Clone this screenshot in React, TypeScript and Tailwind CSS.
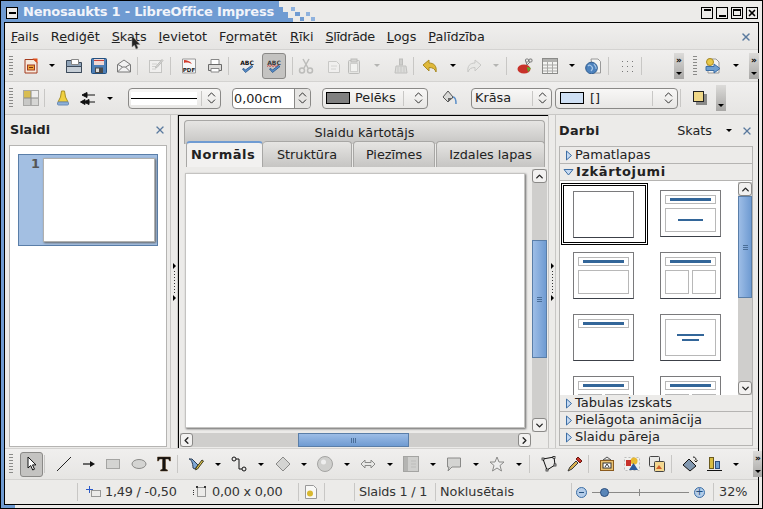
import React from 'react';
import { X, ChevronUp, ChevronDown, ChevronLeft, ChevronRight } from 'lucide-react';

type IconProps = { className?: string };

const Svg: React.FC<IconProps & { children: React.ReactNode }> = ({ className = '', children }) => (
  <svg viewBox="0 0 16 16" className={`w-4 h-4 shrink-0 ${className}`} fill="none">{children}</svg>
);

// toolbar icons, drawn by hand to follow the old Galaxy icon set
const NewDoc = ({ className }: IconProps) => <Svg className={className}><path d="M2 1.500h9l3 3v10.500H2z" fill="#f6e9dc" stroke="#a33a1e" /><path d="M9.500 0.500l5 0 0 5z" fill="#e0501c" /><rect x="4.500" y="7" width="7" height="5" fill="#eda53a" stroke="#a33a1e" /><path d="M6 9.500h4" stroke="#7a2a10" /></Svg>;
const Open = ({ className }: IconProps) => <Svg className={className}><path d="M0.500 2.500h6l1 2h8v10h-15z" fill="#8fa3b8" stroke="#3c4a5a" /><path d="M5.500 1.500h7v5h-7z" fill="#fff" stroke="#888" /><path d="M0.500 8.500h15v6h-15z" fill="#c6ced6" stroke="#3c4a5a" /></Svg>;
const Save = ({ className }: IconProps) => <Svg className={className}><rect x="0.500" y="0.500" width="15" height="15" rx="1" fill="#4d7fb8" stroke="#23507f" /><rect x="3" y="1" width="10" height="6" fill="#f0d8d4" /><path d="M3 2.500h10" stroke="#c8413a" /><rect x="4" y="9.500" width="8" height="5.500" fill="#4a4a4a" /><rect x="5" y="10.500" width="3" height="3.500" fill="#ddd" /></Svg>;
const Mail = ({ className }: IconProps) => <Svg className={className}><path d="M1.500 6.500L8 2l6.500 4.500V14h-13z" fill="#f2f2f2" stroke="#777" /><path d="M1.500 14L6.500 9h3l5 5M2 6.500l4.500 2.500M14 6.500L9.500 9" stroke="#777" /></Svg>;
const Edit = ({ className }: IconProps) => <Svg className={className}><rect x="1.500" y="2.500" width="12" height="12" fill="#f0efee" stroke="#c4c4c2" /><path d="M4 6h5M4 8.500h4M4 11h4" stroke="#d0d0ce" /><path d="M14 1.500l1 1-6 7-1.500.5.500-1.500z" fill="#d8d8d6" stroke="#bdbdbb" /></Svg>;
const Pdf = ({ className }: IconProps) => <Svg className={className}><path d="M1.500 1h13v14h-13z" fill="#f8f8f8" stroke="#999" /><path d="M3 2c3 0 6 1 8 4-2-1-5-2-8-1z" fill="#d23a2a" /><text x="8" y="13.500" textAnchor="middle" fontSize="5.500" fontWeight="700" fill="#222" fontFamily="DejaVu Sans">PDF</text></Svg>;
const Printer = ({ className }: IconProps) => <Svg className={className}><path d="M4 1.500h8v5H4z" fill="#fff" stroke="#888" /><path d="M1.500 6.500h13v6h-13z" fill="#dedddb" stroke="#6a6a6a" /><path d="M4 10.500h8v3.500H4z" fill="#fff" stroke="#888" /></Svg>;
const Spell = ({ className, wave }: IconProps & { wave?: boolean }) => <Svg className={className}><text x="8" y="6.500" textAnchor="middle" fontSize="6" fontWeight="700" fill={wave ? '#3a3a3a' : '#111'} fontFamily="DejaVu Sans">ABC</text>{wave && <path d="M1 8.500l1.500-1 1.500 1 1.500-1 1.500 1 1.500-1 1.500 1 1.500-1 1.500 1" stroke="#d0302a" strokeWidth="0.800" />}<path d="M3.500 11l3 3.500L14 8.500l-1.500-1-6 4.500-1.500-1.500z" fill="#5a8ec8" stroke="#26568c" strokeWidth="0.800" /></Svg>;
const Cut = ({ className }: IconProps) => <Svg className={className}><path d="M5 1l5 9M11 1L6 10" stroke="#bcbcba" strokeWidth="1.500" /><circle cx="4" cy="12.500" r="2.500" stroke="#bcbcba" strokeWidth="1.500" /><circle cx="12" cy="12.500" r="2.500" stroke="#bcbcba" strokeWidth="1.500" /></Svg>;
const Copy = ({ className }: IconProps) => <Svg className={className}><path d="M2.500 3.500h8l3 3v8h-11z" fill="#f0efee" stroke="#c8c8c6" /><path d="M5 8h6M5 11h5" stroke="#d4d4d2" /></Svg>;
const Paste = ({ className }: IconProps) => <Svg className={className}><rect x="2.500" y="2.500" width="11" height="13" rx="1" fill="#e4e4e2" stroke="#bcbcba" /><rect x="5" y="1" width="6" height="3" fill="#d4d4d2" stroke="#bcbcba" /><rect x="4.500" y="5.500" width="7" height="8" fill="#f2f2f0" stroke="#cfcfcd" /></Svg>;
const Brush = ({ className }: IconProps) => <Svg className={className}><rect x="6.500" y="1" width="3" height="6" fill="#cfcfcd" stroke="#bdbdbb" /><path d="M3 8h10l1 7H2z" fill="#dcdcda" stroke="#c0c0be" /><path d="M5 8.500v6M8 8.500v6M11 8.500v6" stroke="#c8c8c6" /></Svg>;
const Undo = ({ className }: IconProps) => <Svg className={className}><path d="M1 7l6-5v3c5 0 8 3 7 9-1-3-3-4.500-7-4.500V13z" fill="#e0b93a" stroke="#a98a22" /></Svg>;
const Redo = ({ className }: IconProps) => <Svg className={className}><path d="M15 7L9 2v3C4 5 1 8 2 14c1-3 3-4.500 7-4.500V13z" fill="#e8e8e6" stroke="#c8c8c6" /></Svg>;
const Navigator = ({ className }: IconProps) => <Svg className={className}><ellipse cx="7" cy="11" rx="6.500" ry="4.500" fill="#c8322a" /><path d="M10 9l4 1-3 4z" fill="#5ab02a" /><rect x="8.500" y="1" width="3" height="3" rx="1" stroke="#777" /><rect x="12" y="1" width="3" height="3" rx="1" stroke="#777" /><path d="M9 4l1 3 3-3" stroke="#777" /></Svg>;
const Table = ({ className }: IconProps) => <Svg className={className}><rect x="0.500" y="0.500" width="15" height="15" fill="#f4f4f2" stroke="#8a8a88" /><rect x="1" y="1" width="14" height="3" fill="#b0b0ae" /><path d="M1 7h14M1 10h14M1 13h14M5.500 4v11M10.500 4v11" stroke="#a8a8a6" /></Svg>;
const Globe = ({ className }: IconProps) => <Svg className={className}><path d="M6 1h7l2.500 2.500V15H8z" fill="#f4f4f2" stroke="#999" /><circle cx="6.500" cy="10" r="5.800" fill="#4d82bd" stroke="#2c5a8e" /><path d="M3 8c2-2 3 0 4 1s0 3-1 4M9 6c1 2 3 3 2 5" stroke="#a8c8e8" strokeWidth="1.200" /></Svg>;
const Dots = ({ className }: IconProps) => <Svg className={className}>{[3, 8, 13].map(x => [3, 8, 13].map(y => <rect key={`${x}-${y}`} x={x} y={y} width="1" height="1" fill="#777" />))}</Svg>;
const SlideNew = ({ className }: IconProps) => <Svg className={className}><path d="M3 1h8l3 3v11H3z" fill="#f4f4f2" stroke="#999" /><circle cx="5" cy="4" r="3.500" fill="#e8c94a" stroke="#a98a22" /><path d="M1 8.500h8V6l6 4.500-6 4.500v-2.500H1z" fill="#6f9fd0" stroke="#3c6ea5" /></Svg>;
const AreaStyle = ({ className }: IconProps) => <Svg className={className}><rect x="0.500" y="0.500" width="15" height="15" fill="#eee" stroke="#a8a8a6" /><rect x="1" y="1" width="7" height="7" fill="#d8bd52" /><rect x="8" y="8" width="7" height="7" fill="#d6d6d4" /><rect x="1" y="8" width="7" height="7" fill="#c8c8c6" /><path d="M8 1v14M1 8h14" stroke="#8a8a88" /></Svg>;
const Bell = ({ className }: IconProps) => <Svg className={className}><path d="M6.500 1h3l1 6 2.500 5H3l2.500-5z" fill="#f0d040" stroke="#a99022" /><rect x="2.500" y="12" width="11" height="3" rx="1" fill="#8eb0d8" stroke="#6a8cb8" /></Svg>;
const Arrows = ({ className }: IconProps) => <Svg className={className}><path d="M15 5H4M7 2.500L2 5l5 2.500z" stroke="#111" fill="#111" /><path d="M15 12H6M9 9.500L4 12l5 2.500zM5 9.500L0.500 12 5 14.500z" stroke="#111" fill="#111" /></Svg>;
const Bucket = ({ className }: IconProps) => <Svg className={className}><path d="M7 1L2 7l5 5 5-5z" fill="#d8d8d6" stroke="#555" /><path d="M12 7c2 0 3 2 3 7" stroke="#5a8ec8" strokeWidth="1.500" /><path d="M7 8h5L7 12z" fill="#666" /></Svg>;
const Shadow = ({ className }: IconProps) => <Svg className={className}><rect x="4" y="4" width="11" height="11" fill="#8a8a88" /><rect x="1.500" y="1.500" width="10" height="10" fill="#f0d888" stroke="#222" /></Svg>;

const Select = ({ className }: IconProps) => <Svg className={className}><path d="M4 1v11l2.700-2.500L8.700 14l1.800-.8-2-4.300H12z" fill="#fff" stroke="#111" /></Svg>;
const Line = ({ className }: IconProps) => <Svg className={className}><path d="M1 15L15 1" stroke="#222" /></Svg>;
const ArrowLine = ({ className }: IconProps) => <Svg className={className}><path d="M2 8h8" stroke="#111" strokeWidth="1.200" /><path d="M9 5l5 3-5 3z" fill="#111" /></Svg>;
const Rect = ({ className }: IconProps) => <Svg className={className}><rect x="1.500" y="3.500" width="13" height="9" fill="#d4d4d2" stroke="#a4a4a2" /></Svg>;
const Ellipse = ({ className }: IconProps) => <Svg className={className}><ellipse cx="8" cy="8" rx="7" ry="4.500" fill="#d4d4d2" stroke="#8a8a88" /></Svg>;
const BigT = ({ className }: IconProps) => <Svg className={className}><path d="M1.500 1h13v4h-1l-1-2H9.500v10l2 1v1h-7v-1l2-1V3H3.500l-1 2h-1z" fill="#111" stroke="#5a3a18" strokeWidth="0.500" /></Svg>;
const Curve = ({ className }: IconProps) => <Svg className={className}><path d="M1 3c2 0 4 4 4 9l2 1 3-4L4 3z" fill="#7fa8d6" stroke="#2c3e55" /><path d="M8 12l6-8 1.500 1-6 8-2 .8z" fill="#e8c94a" stroke="#3a3a1e" /></Svg>;
const Connector = ({ className }: IconProps) => <Svg className={className}><circle cx="3" cy="3" r="2" stroke="#111" /><circle cx="13" cy="13" r="2" stroke="#111" /><path d="M5 3h3v10h3" stroke="#111" /></Svg>;
const Diamond = ({ className }: IconProps) => <Svg className={className}><path d="M8 1l7 7-7 7-7-7z" fill="#d4d4d2" stroke="#8a8a88" /></Svg>;
const Sphere = ({ className }: IconProps) => <Svg className={className}><circle cx="8" cy="8" r="7.500" fill="#cfcfcd" stroke="#a4a4a2" /><circle cx="6.500" cy="6" r="2.500" fill="#eee" /></Svg>;
const Double = ({ className }: IconProps) => <Svg className={className}><path d="M1 8l4-4v2.500h6V4l4 4-4 4V9.500H5V12z" fill="#e8e8e6" stroke="#8a8a88" /></Svg>;
const Block = ({ className }: IconProps) => <Svg className={className}><rect x="0.500" y="0.500" width="15" height="15" fill="#cfcfcd" stroke="#a4a4a2" /><rect x="1" y="1" width="4" height="14" fill="#b4b4b2" /><path d="M8 5h5M8 8h5M8 11h5" stroke="#bdbdbb" /></Svg>;
const Callout = ({ className }: IconProps) => <Svg className={className}><path d="M1.500 2h13v9H6l-4 4 1-4H1.500z" fill="#d4d4d2" stroke="#8a8a88" /></Svg>;
const Star = ({ className }: IconProps) => <Svg className={className}><path d="M8 1l2 5h5l-4 3.500 1.500 5.500L8 12l-4.500 3L5 9.500 1 6h5z" fill="#eee" stroke="#8a8a88" /></Svg>;
const Points = ({ className }: IconProps) => <Svg className={className}><path d="M2 3l11-2 1 8-8 5z" stroke="#111" /><rect x="1" y="2" width="2" height="2" fill="#fff" stroke="#111" strokeWidth="0.700" /><rect x="12" y="0.500" width="2" height="2" fill="#fff" stroke="#111" strokeWidth="0.700" /><rect x="13" y="8" width="2" height="2" fill="#fff" stroke="#111" strokeWidth="0.700" /><rect x="5" y="13" width="2" height="2" fill="#fff" stroke="#111" strokeWidth="0.700" /></Svg>;
const Dropper = ({ className }: IconProps) => <Svg className={className}><path d="M1 15l2-4 6-6 2 2-6 6z" fill="#d8b050" stroke="#3a3a3a" /><path d="M9 3l2-2 4 4-2 2z" fill="#c8322a" stroke="#6a1a10" /></Svg>;
const Frame = ({ className }: IconProps) => <Svg className={className}><path d="M8 1L4 4h8z" stroke="#555" /><rect x="1.500" y="4.500" width="13" height="10" fill="#e8c070" stroke="#8a5a1e" /><rect x="4" y="7" width="8" height="5" fill="#fff" stroke="#333" /><path d="M6 11l2-3 2 3" stroke="#333" /></Svg>;
const Shapes = ({ className }: IconProps) => <Svg className={className}><rect x="0.500" y="1.500" width="15" height="13" fill="#f0f0ee" stroke="#bbb" strokeDasharray="2 2" /><circle cx="10" cy="5" r="3.500" fill="#e8b830" /><rect x="2" y="4" width="5" height="6" fill="#c8322a" /><path d="M5 14l4.500-7 4.500 7z" fill="#2c5a9e" /></Svg>;
const Layers = ({ className }: IconProps) => <Svg className={className}><rect x="0.500" y="0.500" width="10" height="10" rx="1" fill="#e8e8e6" stroke="#444" /><rect x="5.500" y="5.500" width="10" height="10" rx="1" fill="#f4d890" stroke="#444" /><path d="M7 13l3-4 3 4z" fill="#d0602a" /></Svg>;
const Rotate3d = ({ className }: IconProps) => <Svg className={className}><path d="M1 9l6-6 7 7-6 5z" fill="#8298b0" stroke="#111" /><path d="M11 1c2 0 3 1 3 3M12.500 4.500L14 6l1.500-2" stroke="#111" /></Svg>;
const Align = ({ className }: IconProps) => <Svg className={className}><rect x="2.500" y="1.500" width="4" height="11" fill="#d8bd42" stroke="#6a5a1e" /><rect x="8.500" y="5.500" width="4" height="7" fill="#6f9fd0" stroke="#2c4e7e" /><path d="M0 14.500h15" stroke="#111" /></Svg>;

const Pos = ({ className }: IconProps) => <Svg className={className}><path d="M3.500 2v7M0 5.500h7" stroke="#2c5ac8" /><rect x="5.500" y="6.500" width="9" height="6" stroke="#444" strokeDasharray="1 1" /></Svg>;
const Size = ({ className }: IconProps) => <Svg className={className}><rect x="5.500" y="3.500" width="8" height="9" stroke="#444" strokeDasharray="1 1" /><rect x="4" y="2" width="2" height="2" fill="#333" /><rect x="12" y="2" width="2" height="2" fill="#333" /><path d="M1.500 6v6" stroke="#333" strokeDasharray="1 1" /></Svg>;
const DocMod = ({ className }: IconProps) => <Svg className={className}><path d="M2.500 1.500h8l3 3v10h-11z" fill="#f8f8f6" stroke="#999" /><circle cx="7" cy="9.500" r="3" fill="#d8b830" /></Svg>;

const TriRight = () => <svg viewBox="0 0 8 11" className="ml-[5px] w-[8px] h-[11px] shrink-0"><path d="M1.500 1l5 4.500-5 4.500z" fill="#c6daf2" stroke="#3c6ea5" /></svg>;
const TriDown = () => <svg viewBox="0 0 11 8" className="ml-[3px] w-[11px] h-[8px] shrink-0"><path d="M1 1.500h9L5.500 7z" fill="#c6daf2" stroke="#3c6ea5" /></svg>;

const Arrow = ({ className = '' }: IconProps) => (
  <span className={`w-0 h-0 shrink-0 border-x-[3px] border-x-transparent border-t-[3px] border-t-black ${className}`} />
);
const GreyArrow = ({ className = '' }: IconProps) => (
  <span className={`w-0 h-0 shrink-0 border-x-[3px] border-x-transparent border-t-[3px] border-t-[#b4b4b2] ${className}`} />
);
const Sep = ({ className = '' }: IconProps) => <span className={`w-px h-[18px] shrink-0 bg-[#c8c7c5] ${className}`} />;
const Grip = ({ className = '' }: IconProps) => (
  <span className={`w-1 h-[22px] shrink-0 bg-[radial-gradient(circle,#8a8a88_0.7px,transparent_0.9px)] bg-[length:2px_3px] ${className}`} />
);
const Overflow = ({ className = '', more = true }: IconProps & { more?: boolean }) => (
  <span className={`w-[10px] h-[26px] shrink-0 flex flex-col items-center justify-between py-1 bg-gradient-to-b from-[#dcdbd9] to-[#a8a7a5] text-[9px] leading-[7px] font-bold text-black ${className}`}>
    <span>{more ? '»' : ''}</span><Arrow />
  </span>
);
// spinner with the two little chevrons, used in every combo box
const Spin = ({ className = '' }: IconProps) => (
  <span className={`flex flex-col items-center justify-center shrink-0 text-[#111] ${className}`}>
    <ChevronUp size={13} strokeWidth={1.6} className="-mb-[3px]" />
    <ChevronDown size={13} strokeWidth={1.6} className="-mt-[3px]" />
  </span>
);
const Combo: React.FC<{ className: string; children: React.ReactNode }> = ({ className, children }) => (
  <div className={`h-[21px] flex items-center shrink-0 rounded-[4px] border border-[#8a8987] bg-gradient-to-b from-[#f8f7f6] to-[#e8e7e5] ${className}`}>
    {children}
    <span className="w-px h-[15px] ml-auto bg-[#c8c7c5]" />
    <Spin className="w-[18px]" />
  </div>
);

const VThumb: React.FC<{ className: string }> = ({ className }) => (
  <span className={`flex flex-col items-center justify-center gap-[1px] bg-gradient-to-r from-[#9dbde6] to-[#6f9bd2] border border-[#5a7ea8] ${className}`}>
    <span className="w-[5px] h-px bg-[#4a6e98]" />
    <span className="w-[5px] h-px bg-[#4a6e98]" />
    <span className="w-[5px] h-px bg-[#4a6e98]" />
  </span>
);

const VScroll: React.FC<{ className: string; thumb: string }> = ({ className, thumb }) => (
  <div className={`flex flex-col shrink-0 bg-[#cfcecc] ${className}`}>
    <span className="h-[14px] flex items-center justify-center rounded-[3px] border border-[#8a8987] bg-[#f2f1f0]"><ChevronUp size={11} strokeWidth={3} className="text-[#222]" /></span>
    <VThumb className={thumb} />
    <span className="flex-1" />
    <span className="h-[14px] flex items-center justify-center rounded-[3px] border border-[#8a8987] bg-[#f2f1f0]"><ChevronDown size={11} strokeWidth={3} className="text-[#222]" /></span>
  </div>
);

// drag handle between the panes: a dotted line with a small arrow at both ends
const PaneHandle = () => (
  <div className="w-[8px] shrink-0 flex flex-col items-center justify-center border-x border-[#c8c7c5]">
    <span className="w-0 h-0 border-y-[3px] border-y-transparent border-l-[3px] border-l-black" />
    <span className="my-[2px] w-px h-[22px] bg-[linear-gradient(#333_50%,transparent_50%)] bg-[length:1px_3px]" />
    <span className="w-0 h-0 border-y-[3px] border-y-transparent border-l-[3px] border-l-black" />
  </div>
);

const Section: React.FC<{ label: string; bold?: boolean; open?: boolean }> = ({ label, bold, open }) => (
  <div className="h-[17px] flex items-center shrink-0 border-b border-[#b5b4b2] bg-[#ecebe9] text-[13px] text-[#222]">
    {open ? <TriDown /> : <TriRight />}
    <span className={`ml-[2px] ${bold ? 'font-bold tracking-[0.6px]' : ''}`}>{label}</span>
  </div>
);

const LayoutThumb: React.FC<{ children?: React.ReactNode }> = ({ children }) => (
  <div className="w-[61px] h-[47px] shrink-0 bg-white border border-[#7a7a7c] border-b-[#3c4048] flex flex-col gap-[1px] p-[4px]">
    {children}
  </div>
);
const TitleBox = () => (
  <div className="h-[9px] shrink-0 border border-[#b8b8b8] flex items-center justify-center">
    <span className="w-[41px] h-[3px] bg-[#336699]" />
  </div>
);
const TwoBoxes = () => (
  <div className="mt-[3px] flex-1 flex gap-[3px]"><span className="flex-1 border border-[#b8b8b8]" /><span className="flex-1 border border-[#b8b8b8]" /></div>
);

const Tab: React.FC<{ className: string; children: React.ReactNode }> = ({ className, children }) => (
  <div className={`flex items-center justify-center rounded-t-[4px] border border-b-0 border-[#a8a7a5] bg-gradient-to-b from-[#e6e5e3] to-[#c6c5c3] text-[12.8px] text-[#222] ${className}`}>
    {children}
  </div>
);

export default function App() {
  return (
    <div className="w-[763px] h-[509px] overflow-hidden relative flex flex-col border border-black bg-[#ecebe9] text-[#222] text-[12.8px] font-['DejaVu_Sans',sans-serif]">
      {/* title bar */}
      <div className="h-[21px] shrink-0 flex items-stretch bg-[#ecebe9]">
        <div className="w-[277px] flex items-center bg-[#6f9bd2]">
          <span className="w-[12px] h-[12px] ml-[5px] mt-[2px] border border-black bg-[#ecebe9] flex items-center justify-center"><span className="w-[7px] h-[2px] bg-black" /></span>
          <span className="ml-[5px] text-[13px] font-bold tracking-[-0.2px] text-[#f2f4fa] whitespace-nowrap">Nenosaukts 1 - LibreOffice Impress</span>
        </div>
        {/* the stepped fade of the window decoration */}
        <svg viewBox="0 0 40 21" className="w-[40px] h-[21px] shrink-0">
          <path d="M0 0h1v6h4v5h5v6h5v4H0z" fill="#6f9bd2" />
          <rect x="13" y="6" width="4" height="4" fill="#8fb2de" />
          <rect x="17" y="11" width="5" height="4" fill="#6f9bd2" />
          <rect x="28" y="11" width="4" height="4" fill="#8fb2de" />
          <rect x="22" y="16" width="4" height="4" fill="#6f9bd2" />
          <rect x="33" y="16" width="4" height="4" fill="#8fb2de" />
        </svg>
        <div className="ml-auto mr-[4px] mt-[2px] flex items-center gap-[3px]">
          <span className="w-[12px] h-[12px] border border-black flex justify-center"><span className="w-[7px] h-[2px] mt-[1px] bg-black" /></span>
          <span className="w-[12px] h-[12px] border border-black flex justify-center items-end"><span className="w-[7px] h-[2px] mb-[1px] bg-black" /></span>
          <span className="w-[12px] h-[12px] border border-black flex justify-center items-center"><span className="w-[8px] h-[7px] border border-black border-t-2" /></span>
          <span className="w-[12px] h-[12px] border border-black flex justify-center items-center"><X size={10} strokeWidth={4} className="text-black" /></span>
        </div>
      </div>

      {/* window frame */}
      <div className="flex-1 min-h-0 flex flex-col border-x-[3px] border-b-[3px] border-l-[#6f9bd2] border-r-[#ecebe9] border-b-[#ecebe9]">
        <div className="flex-1 min-h-0 flex flex-col border border-black">
          {/* menu bar */}
          <div className="h-[27px] shrink-0 flex items-center pt-[1px] bg-gradient-to-b from-[#f0efee] to-[#e6e5e3] border-b border-[#d4d3d1]">
            <span className="ml-[6px]"><u>F</u>ails</span>
            <span className="ml-[12px]">R<u>e</u>diģēt</span>
            <span className="ml-[12px]"><u>S</u>kats</span>
            <span className="ml-[12px]"><u>I</u>evietot</span>
            <span className="ml-[12px]">F<u>o</u>rmatēt</span>
            <span className="ml-[13px]"><u>R</u>īki</span>
            <span className="ml-[12px] tracking-[-0.4px]"><u>S</u>līdrāde</span>
            <span className="ml-[12px]"><u>L</u>ogs</span>
            <span className="ml-[12px]"><u>P</u>alīdzība</span>
            <X size={12} strokeWidth={3} className="ml-auto mr-[6px] text-[#5a7a9e]" />
          </div>

          {/* standard toolbar */}
          <div className="h-[32px] shrink-0 flex items-center bg-gradient-to-b from-[#f0efee] to-[#e6e5e3] border-b border-[#d4d3d1]">
            <Grip className="ml-[4px]" />
            <NewDoc className="ml-[10px]" />
            <Arrow className="ml-[10px]" />
            <Open className="ml-[11px]" />
            <Save className="ml-[9px]" />
            <Mail className="ml-[9px]" />
            <Sep className="ml-[5px]" />
            <Edit className="ml-[10px]" />
            <Sep className="ml-[6px]" />
            <Pdf className="ml-[10px]" />
            <Printer className="ml-[10px]" />
            <Sep className="ml-[5px]" />
            <Spell className="ml-[10px]" />
            <span className="ml-[7px] w-[24px] h-[26px] shrink-0 flex items-center justify-center rounded-[3px] border border-[#8a8987] bg-[#c4c3c1]"><Spell wave /></span>
            <Sep className="ml-[6px]" />
            <Cut className="ml-[5px]" />
            <Copy className="ml-[12px]" />
            <Paste className="ml-[4px]" />
            <GreyArrow className="ml-[12px]" />
            <Brush className="ml-[13px]" />
            <Sep className="ml-[4px]" />
            <Undo className="ml-[8px]" />
            <Arrow className="ml-[12px]" />
            <Redo className="ml-[10px]" />
            <GreyArrow className="ml-[11px]" />
            <Sep className="ml-[7px]" />
            <Navigator className="ml-[10px]" />
            <Table className="ml-[9px]" />
            <Arrow className="ml-[11px]" />
            <Globe className="ml-[10px]" />
            <Sep className="ml-[7px]" />
            <Dots className="ml-[10px]" />
            <Sep className="ml-[6px]" />
            <Overflow className="ml-[32px]" />
            <Grip className="ml-[9px]" />
            <SlideNew className="ml-[8px]" />
            <Arrow className="ml-[12px]" />
            <Overflow className="ml-[10px]" />
          </div>

          {/* line and filling toolbar */}
          <div className="h-[33px] shrink-0 flex items-center bg-gradient-to-b from-[#f0efee] to-[#e6e5e3] border-b border-[#c8c7c5]">
            <Grip className="ml-[4px]" />
            <AreaStyle className="ml-[10px]" />
            <Sep className="ml-[5px]" />
            <Bell className="ml-[10px]" />
            <Arrows className="ml-[9px]" />
            <Arrow className="ml-[11px]" />
            <Combo className="ml-[15px] w-[93px] pl-[2px]"><span className="w-[66px] h-[13px] bg-white flex items-center"><span className="w-full h-px bg-black" /></span></Combo>
            <div className="ml-[11px] w-[79px] h-[21px] shrink-0 flex items-stretch rounded-[4px] border border-[#8a8987] bg-white">
              <span className="flex-1 pl-[1px] leading-[19px]">0,00cm</span>
              <span className="w-[16px] flex items-center justify-center bg-[#e6e5e3] border-l border-[#8a8987] rounded-r-[4px]"><Spin /></span>
            </div>
            <Combo className="ml-[11px] w-[106px] pl-[3px] gap-[5px]"><span className="w-[24px] h-[12px] bg-[#808080] border border-black" /><span>Pelēks</span></Combo>
            <Bucket className="ml-[13px]" />
            <Combo className="ml-[14px] w-[81px] pl-[3px]"><span>Krāsa</span></Combo>
            <Combo className="ml-[3px] w-[123px] pl-[4px] gap-[6px]"><span className="w-[24px] h-[12px] bg-[#cfe0f4] border border-black" /><span>[]</span></Combo>
            <Sep className="ml-[2px]" />
            <Shadow className="ml-[11px]" />
            <Overflow className="ml-[8px]" more={false} />
          </div>

          {/* panes */}
          <div className="flex-1 min-h-0 flex">
            {/* slides pane */}
            <div className="w-[165px] shrink-0 flex flex-col">
              <div className="h-[30px] shrink-0 flex items-center justify-between pl-[5px] pr-[4px] font-bold">
                <span>Slaidi</span>
                <X size={12} strokeWidth={2.5} className="text-[#5a7a9e]" />
              </div>
              <div className="flex-1 ml-[4px] mr-[3px] mb-[1px] bg-white border border-[#b5b4b2] pt-[8px] pl-[8px]">
                <div className="w-[140px] h-[92px] flex bg-[#a3bfe2] border border-[#5a7ea8]">
                  <span className="w-[24px] text-right pr-[3px] pt-[2px] font-bold leading-[14px] text-[#555]">1</span>
                  <div className="mt-[3px] w-[112px] h-[84px] bg-white border border-[#b0b0ae] shadow-[1px_1px_2px_#666]" />
                </div>
              </div>
            </div>
            <PaneHandle />

            {/* edit view */}
            <div className="w-[370px] shrink-0 flex flex-col border-l border-t border-black pl-[5px]">
              <div className="pt-[4px] shrink-0">
                <Tab className="w-[361px] h-[24px]">Slaidu kārtotājs</Tab>
                <div className="flex -mt-[3px] h-[26px] items-stretch">
                  <div className="ml-[2px] w-[77px] flex items-center pl-[4px] rounded-t-[4px] border border-b-0 border-[#a8a7a5] border-t-2 border-t-[#6f9bd2] bg-[#f2f1f0] font-bold tracking-[0.5px] text-[13px]">Normāls</div>
                  <Tab className="w-[89px] h-[26px] border-l-0">Struktūra</Tab>
                  <Tab className="ml-[1px] w-[82px] h-[26px]">Piezīmes</Tab>
                  <Tab className="ml-[1px] w-[109px] h-[26px]">Izdales lapas</Tab>
                </div>
              </div>
              <div className="flex-1 min-h-0 flex">
                <div className="w-[348px] pt-[6px]">
                  <div className="ml-[1px] w-[340px] h-[255px] bg-white border border-[#c4c3c1] shadow-[1px_1px_2px_#666]" />
                </div>
                <VScroll className="w-[15px] h-[263px] mt-[2px]" thumb="mt-[57px] h-[118px]" />
              </div>
              <div className="h-[14px] mb-[1px] -ml-[4px] w-[351px] shrink-0 flex bg-[#cfcecc]">
                <span className="w-[13px] flex items-center justify-center rounded-[3px] border border-[#8a8987] bg-[#f2f1f0]"><ChevronLeft size={11} strokeWidth={3} /></span>
                <span className="ml-[105px] w-[111px] flex items-center justify-center gap-[1px] bg-gradient-to-b from-[#9dbde6] to-[#6f9bd2] border border-[#5a7ea8]">
                  <span className="w-px h-[5px] bg-[#4a6e98]" />
                  <span className="w-px h-[5px] bg-[#4a6e98]" />
                  <span className="w-px h-[5px] bg-[#4a6e98]" />
                </span>
                <span className="ml-auto w-[13px] flex items-center justify-center rounded-[3px] border border-[#8a8987] bg-[#f2f1f0]"><ChevronRight size={11} strokeWidth={3} /></span>
              </div>
            </div>
            <PaneHandle />

            {/* tasks pane */}
            <div className="flex-1 min-w-0 flex flex-col pl-[3px] pr-[5px]">
              <div className="h-[31px] shrink-0 flex items-center">
                <span className="font-bold tracking-[0.3px]">Darbi</span>
                <span className="ml-auto">Skats</span>
                <Arrow className="ml-[14px]" />
                <X size={12} strokeWidth={2.5} className="ml-[9px] text-[#5a7a9e]" />
              </div>
              <div className="border-x border-[#b5b4b2] border-t flex flex-col flex-1 min-h-0 mb-[2px]">
                <Section label="Pamatlapas" />
                <Section label="Izkārtojumi" bold open />
                <div className="h-[214px] shrink-0 flex overflow-hidden bg-white">
                  <div className="flex-1 min-w-0 pl-[1px] pt-[2px] grid grid-cols-[87px_61px] gap-x-[12px] content-start">
                    <div className="h-[62px] border-[3px] border-double border-black flex items-center justify-center pr-[2px]">
                      <LayoutThumb />
                    </div>
                    <div className="pt-[7px] h-[62px]">
                      <LayoutThumb>
                        <TitleBox />
                        <div className="mt-[3px] flex-1 border border-[#b8b8b8] flex items-center justify-center"><span className="w-[25px] h-[2px] bg-[#336699]" /></div>
                      </LayoutThumb>
                    </div>
                    <div className="pl-[12px] h-[62px] pt-[7px]">
                      <LayoutThumb>
                        <TitleBox />
                        <div className="mt-[3px] flex-1 border border-[#b8b8b8]" />
                      </LayoutThumb>
                    </div>
                    <div className="h-[62px] pt-[7px]">
                      <LayoutThumb><TitleBox /><TwoBoxes /></LayoutThumb>
                    </div>
                    <div className="pl-[12px] h-[62px] pt-[7px]">
                      <LayoutThumb><TitleBox /></LayoutThumb>
                    </div>
                    <div className="h-[62px] pt-[7px]">
                      <LayoutThumb>
                        <div className="flex-1 border border-[#b8b8b8] flex flex-col items-center justify-center gap-[3px]"><span className="w-[27px] h-[2px] bg-[#336699]" /><span className="w-[17px] h-[2px] bg-[#336699]" /></div>
                      </LayoutThumb>
                    </div>
                    <div className="pl-[12px] h-[62px] pt-[7px]">
                      <LayoutThumb><TitleBox /><TwoBoxes /></LayoutThumb>
                    </div>
                    <div className="h-[62px] pt-[7px]">
                      <LayoutThumb><TitleBox /><TwoBoxes /></LayoutThumb>
                    </div>
                  </div>
                  <VScroll className="w-[14px] h-[213px] mt-[1px]" thumb="h-[102px]" />
                </div>
                <Section label="Tabulas izskats" />
                <Section label="Pielāgota animācija" />
                <Section label="Slaidu pāreja" />
              </div>
            </div>
          </div>

          {/* drawing toolbar */}
          <div className="h-[32px] shrink-0 flex items-center bg-gradient-to-b from-[#f0efee] to-[#e6e5e3] border-y border-[#d4d3d1]">
            <Grip className="ml-[4px]" />
            <span className="ml-[7px] w-[23px] h-[25px] shrink-0 flex items-center justify-center rounded-[3px] border border-[#8a8987] bg-[#c4c3c1]"><Select /></span>
            <Sep className="ml-[1px]" />
            <Line className="ml-[11px]" />
            <ArrowLine className="ml-[9px]" />
            <Rect className="ml-[8px]" />
            <Ellipse className="ml-[10px]" />
            <BigT className="ml-[9px]" />
            <Sep className="ml-[5px]" />
            <Curve className="ml-[10px]" />
            <Arrow className="ml-[11px]" />
            <Connector className="ml-[10px]" />
            <Arrow className="ml-[11px]" />
            <Diamond className="ml-[11px]" />
            <Arrow className="ml-[10px]" />
            <Sphere className="ml-[10px]" />
            <Arrow className="ml-[11px]" />
            <Double className="ml-[10px]" />
            <Arrow className="ml-[11px]" />
            <Block className="ml-[10px]" />
            <Arrow className="ml-[11px]" />
            <Callout className="ml-[10px]" />
            <Arrow className="ml-[11px]" />
            <Star className="ml-[10px]" />
            <Arrow className="ml-[11px]" />
            <Sep className="ml-[7px]" />
            <Points className="ml-[11px]" />
            <Dropper className="ml-[10px]" />
            <Sep className="ml-[5px]" />
            <Frame className="ml-[10px]" />
            <Shapes className="ml-[9px]" />
            <Layers className="ml-[9px]" />
            <Sep className="ml-[6px]" />
            <Rotate3d className="ml-[10px]" />
            <Align className="ml-[9px]" />
            <Arrow className="ml-[10px]" />
            <Overflow className="ml-[14px]" />
          </div>

          {/* status bar */}
          <div className="h-[24px] shrink-0 flex items-center text-[#333]">
            <Sep className="ml-[72px]" />
            <Pos className="ml-[8px]" />
            <span className="ml-[3px] w-[75px] whitespace-nowrap tracking-[-0.2px]">1,49 / -0,50</span>
            <Size className="ml-[12px]" />
            <span className="ml-[4px] w-[86px] whitespace-nowrap tracking-[-0.2px]">0,00 x 0,00</span>
            <Sep />
            <DocMod className="ml-[4px]" />
            <Sep className="ml-[5px]" />
            <Sep className="ml-[29px]" />
            <span className="ml-[4px] w-[76px] whitespace-nowrap tracking-[-0.2px]">Slaids 1 / 1</span>
            <Sep />
            <span className="ml-[4px] w-[131px] whitespace-nowrap">Noklusētais</span>
            <Sep />
            <span className="ml-[4px] w-[11px] h-[11px] rounded-full border border-[#3c6ea5] bg-[#b4cce8] flex items-center justify-center"><span className="w-[5px] h-px bg-[#23507f]" /></span>
            <span className="ml-[5px] w-[97px] h-[11px] flex items-center relative">
              <span className="w-full h-px bg-[#8a8987]" />
              <span className="absolute left-[8px] w-[9px] h-[9px] rounded-full bg-[#5a86b8] border border-[#2c4e7e]" />
              <span className="absolute left-[47px] w-px h-[7px] bg-[#8a8987]" />
            </span>
            <span className="ml-[5px] w-[11px] h-[11px] rounded-full border border-[#3c6ea5] bg-[#b4cce8] flex items-center justify-center text-[10px] leading-none text-[#23507f]">+</span>
            <Sep className="ml-[8px]" />
            <span className="ml-[5px]">32%</span>
          </div>
        </div>
      </div>

      {/* blue end of the frame in the lower left corner */}
      <span className="absolute left-0 bottom-0 w-[14px] h-[3px] bg-[#6f9bd2]" />
      {/* mouse pointer caught in the shot, sits over the menu */}
      <svg viewBox="0 0 10 16" className="absolute left-[130px] top-[34px] w-[10px] h-[16px]"><path d="M1 1v11l2.500-2 1.500 4 2-1-1.500-3.500H9z" fill="#222" stroke="#888" strokeWidth="0.500" /></svg>
    </div>
  );
}
